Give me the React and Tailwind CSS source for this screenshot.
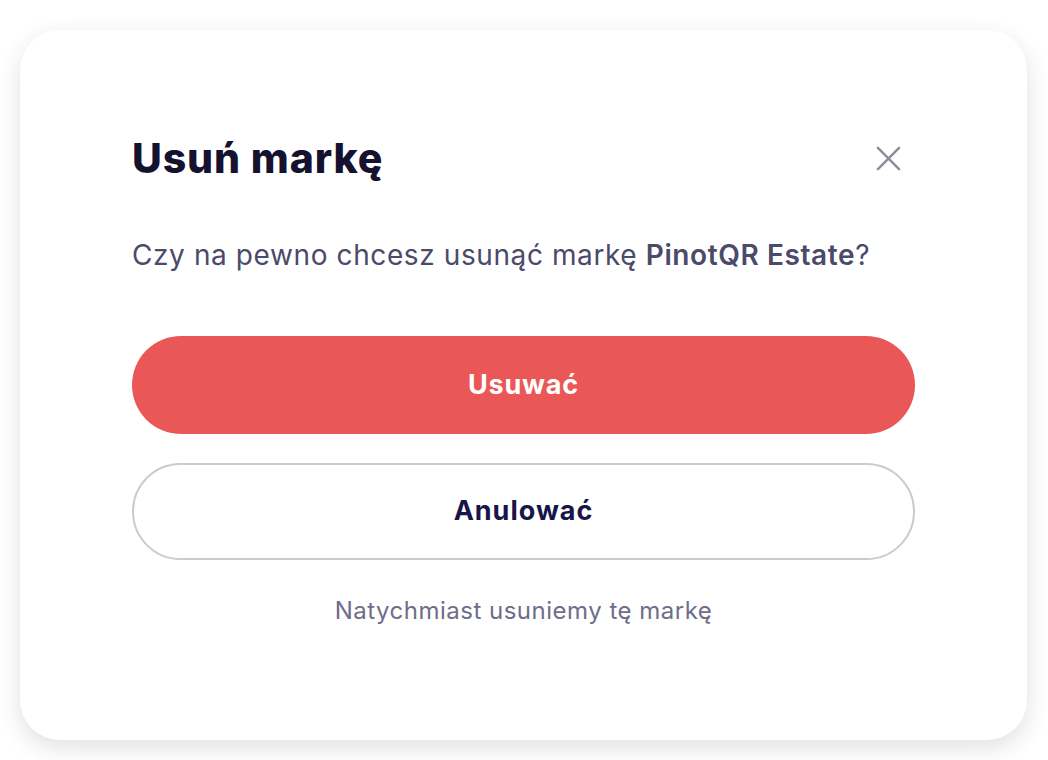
export default function App() {
  return (
    <div className="min-h-screen bg-white px-[20px] pt-[30px]" style={{ fontFamily: '"Inter", "Noto Sans", sans-serif' }}>
      <div className="w-[1007px] h-[710px] bg-white rounded-[40px] shadow-[0_8px_24px_rgba(0,0,0,0.12)] px-[112px] pt-[104px]">
        <div className="flex items-center justify-between">
          <h2 className="text-[41px] leading-[48px] font-extrabold text-[#14122e] tracking-[0.9px]">Usuń markę</h2>
          <button type="button" className="w-[40px] h-[40px] flex items-center justify-center mr-[7px]">
            <svg width="25" height="25" viewBox="0 0 26 26" fill="none" stroke="#8e8d99" strokeWidth="2.6" strokeLinecap="round">
              <path d="M2 2L24 24M24 2L2 24" />
            </svg>
          </button>
        </div>

        <p className="mt-[55px] text-[28px] leading-[36px] tracking-[0.6px] text-[#4b4a6a]">
          Czy na pewno chcesz usunąć markę <span className="font-semibold">PinotQR Estate</span>?
        </p>

        <div className="mt-[63px] flex flex-col gap-[29px]">
          <button type="button" className="h-[98px] w-full rounded-full bg-[#ea5757] text-white text-[27px] tracking-[0.8px] font-bold">
            Usuwać
          </button>
          <button type="button" className="h-[97px] w-full rounded-full border-2 border-[#cacacf] bg-white text-[#17154a] text-[27px] tracking-[1px] font-bold">
            Anulować
          </button>
        </div>

        <p className="mt-[35px] text-center text-[24px] leading-[32px] tracking-[0.5px] text-[#6e6d8a]">Natychmiast usuniemy tę markę</p>
      </div>
    </div>
  );
}
